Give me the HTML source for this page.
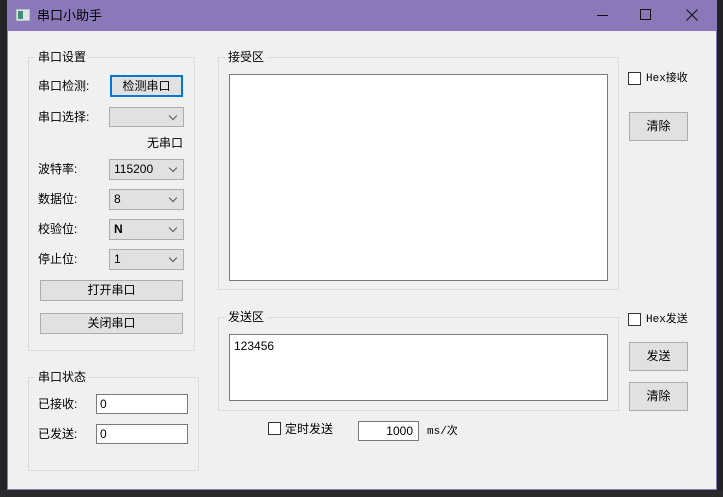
<!DOCTYPE html>
<html><head><meta charset="utf-8">
<style>
*{margin:0;padding:0;box-sizing:border-box}
body{width:723px;height:497px;background:#222326;position:relative;overflow:hidden;font-family:"Liberation Sans","Noto Sans CJK SC","WenQuanYi Zen Hei",sans-serif;font-size:12px;color:#000}
.a{position:absolute}
#win{left:7px;top:0;width:710px;height:490px;background:#f0f0f0;border:1px solid #8a77b8;border-top:none}
#tb{left:7px;top:0;width:710px;height:31px;background:#8b78b9}
.grp{position:absolute;border:1px solid #dcdcdc}
.gt{position:absolute;background:#f0f0f0;padding:0 3px;font-size:12px;line-height:14px}
.lbl{position:absolute;font-size:12px;line-height:14px;white-space:nowrap}
.btn{position:absolute;background:#e1e1e1;border:1px solid #adadad;text-align:center;font-size:12px}
.cb{position:absolute;background:#e1e1e1;border:1px solid #adadad;font-size:12px;padding-left:4px;font-family:"Liberation Sans",sans-serif}
.cb:after{content:"";position:absolute;right:7px;top:5px;width:5px;height:5px;border-right:1px solid #555;border-bottom:1px solid #555;transform:rotate(45deg)}
.ed{position:absolute;background:#fff;border:1px solid #7a7a7a;font-size:12px;font-family:"Liberation Sans",sans-serif}
.chk{position:absolute;width:13px;height:13px;background:#fff;border:1px solid #333}
.mono{font-family:"Liberation Mono","DejaVu Sans Mono","Noto Sans CJK SC",monospace;font-size:11px}
</style></head><body>
<div class="a" style="left:0;top:490px;width:723px;height:7px;background:#2b2b2e"></div>
<div id="win" class="a"></div>
<div id="tb" class="a"></div>
<div class="a" style="left:16px;top:9px;width:14px;height:12px;background:#dfe6e6;border:1px solid #b9c4c4"><div class="a" style="left:1px;top:1px;width:5px;height:8px;background:#3f8a7a"></div></div>
<div class="lbl" style="left:37px;top:8px;font-size:13px;line-height:16px">串口小助手</div>
<div class="a" style="left:597px;top:15px;width:11px;height:1px;background:#111"></div>
<div class="a" style="left:640px;top:9px;width:11px;height:11px;border:1px solid #111"></div>
<svg class="a" style="left:686px;top:9px" width="12" height="12"><path d="M0.5 0.5L11.5 11.5M11.5 0.5L0.5 11.5" stroke="#111" stroke-width="1.1"/></svg>

<div class="grp" style="left:28px;top:57px;width:167px;height:294px"></div>
<div class="gt" style="left:35px;top:50px">串口设置</div>
<div class="lbl" style="left:38px;top:79px">串口检测:</div>
<div class="btn" style="left:110px;top:75px;width:73px;height:22px;border:2px solid #0078d7;line-height:18px">检测串口</div>
<div class="lbl" style="left:38px;top:110px">串口选择:</div>
<div class="cb" style="left:109px;top:107px;width:75px;height:20px"></div>
<div class="lbl" style="left:147px;top:136px">无串口</div>
<div class="lbl" style="left:38px;top:162px">波特率:</div>
<div class="cb" style="left:109px;top:159px;width:75px;height:21px;line-height:19px">115200</div>
<div class="lbl" style="left:38px;top:192px">数据位:</div>
<div class="cb" style="left:109px;top:189px;width:75px;height:21px;line-height:19px">8</div>
<div class="lbl" style="left:38px;top:222px">校验位:</div>
<div class="cb" style="left:109px;top:219px;width:75px;height:21px;line-height:19px;font-weight:bold">N</div>
<div class="lbl" style="left:38px;top:252px">停止位:</div>
<div class="cb" style="left:109px;top:249px;width:75px;height:21px;line-height:19px">1</div>
<div class="btn" style="left:40px;top:280px;width:143px;height:21px;line-height:19px">打开串口</div>
<div class="btn" style="left:40px;top:313px;width:143px;height:21px;line-height:19px">关闭串口</div>

<div class="grp" style="left:28px;top:377px;width:171px;height:94px"></div>
<div class="gt" style="left:35px;top:370px">串口状态</div>
<div class="lbl" style="left:38px;top:397px">已接收:</div>
<div class="ed" style="left:96px;top:394px;width:92px;height:20px;line-height:18px;padding-left:3px">0</div>
<div class="lbl" style="left:38px;top:427px">已发送:</div>
<div class="ed" style="left:96px;top:424px;width:92px;height:20px;line-height:18px;padding-left:3px">0</div>

<div class="grp" style="left:218px;top:57px;width:401px;height:233px"></div>
<div class="gt" style="left:225px;top:50px">接受区</div>
<div class="ed" style="left:229px;top:74px;width:379px;height:207px"></div>

<div class="grp" style="left:218px;top:317px;width:401px;height:94px"></div>
<div class="gt" style="left:225px;top:310px">发送区</div>
<div class="ed" style="left:229px;top:334px;width:379px;height:67px;padding:4px 4px;line-height:14px">123456</div>

<div class="chk" style="left:628px;top:72px"></div>
<div class="lbl mono" style="left:646px;top:72px">Hex接收</div>
<div class="btn" style="left:629px;top:112px;width:59px;height:29px;line-height:27px">清除</div>
<div class="chk" style="left:628px;top:313px"></div>
<div class="lbl mono" style="left:646px;top:313px">Hex发送</div>
<div class="btn" style="left:629px;top:342px;width:59px;height:29px;line-height:27px">发送</div>
<div class="btn" style="left:629px;top:382px;width:59px;height:29px;line-height:27px">清除</div>

<div class="chk" style="left:268px;top:422px"></div>
<div class="lbl" style="left:285px;top:422px">定时发送</div>
<div class="ed" style="left:358px;top:421px;width:61px;height:20px;line-height:18px;text-align:right;padding-right:5px">1000</div>
<div class="lbl mono" style="left:427px;top:425px">ms/次</div>
</body></html>
